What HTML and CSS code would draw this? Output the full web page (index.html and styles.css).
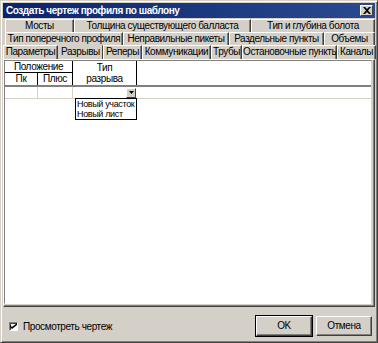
FILE: index.html
```html
<!DOCTYPE html>
<html>
<head>
<meta charset="utf-8">
<link rel="stylesheet" href="styles.css">
</head>
<body>
<div class="window">
  <div class="titlebar">
    <span class="title">Создать чертеж профиля по шаблону</span>
    <span class="close">
      <svg width="8" height="7" viewBox="0 0 8 7"><path d="M0 0h2l2 2 2-2h2L5 3.5 8 7H6L4 5 2 7H0l3-3.5z" fill="#000"/></svg>
    </span>
  </div>
  <div class="tabs">
    <div class="tabrow row1">
      <div class="tab" style="width:69px">Мосты</div>
      <div class="tab" style="width:177px">Толщина существующего балласта</div>
      <div class="tab" style="width:124px">Тип и глубина болота</div>
    </div>
    <div class="tabrow row2">
      <div class="tab" style="width:118px">Тип поперечного профиля</div>
      <div class="tab" style="width:106px">Неправильные пикеты</div>
      <div class="tab" style="width:95px">Раздельные пункты</div>
      <div class="tab" style="width:51px">Объемы</div>
    </div>
    <div class="tabrow row3">
      <div class="tab" style="width:55px">Параметры</div>
      <div class="tab active" style="width:45px">Разрывы</div>
      <div class="tab" style="width:39px">Реперы</div>
      <div class="tab" style="width:69px">Коммуникации</div>
      <div class="tab" style="width:31px">Трубы</div>
      <div class="tab" style="width:95px">Остановочные пункты</div>
      <div class="tab" style="width:39px">Каналы</div>
    </div>
  </div>
  <div class="panel">
    <div class="grid">
      <div class="header">
        <div class="hgroup">
          <div class="hcell htop">Положение</div>
          <div class="hsub">
            <div class="hcell c1">Пк</div>
            <div class="hcell c2">Плюс</div>
          </div>
        </div>
        <div class="hcell c3 htall">Тип<br>разрыва</div>
      </div>
      <div class="datarow">
        <div class="dcell c1"></div>
        <div class="dcell c2"></div>
        <div class="dcell c3 combo">
          <span class="dropbtn"><svg width="5" height="3" viewBox="0 0 5 3"><path d="M0 0h5L2.5 3z" fill="#000"/></svg></span>
          <div class="droplist">
            <div>Новый участок</div>
            <div>Новый лист</div>
          </div>
        </div>
      </div>
    </div>
  </div>
  <div class="footer">
    <label class="check">
      <span class="box"><svg width="7" height="7" viewBox="0 0 7 7"><path d="M0 2l2 2 5-4v2L2 6 0 4z" fill="#000"/></svg></span>
      Просмотреть чертеж
    </label>
    <div class="buttons">
      <button class="btn default">OK</button>
      <button class="btn">Отмена</button>
    </div>
  </div>
</div>
</body>
</html>
```

FILE: styles.css
```css
* { box-sizing: border-box; }
html, body { margin: 0; padding: 0; background: #d4d0c8; }
body {
  font-family: "Liberation Sans", Arial, sans-serif;
  font-size: 10px;
  letter-spacing: -0.4px;
  color: #000;
}
.window {
  width: 378px;
  height: 343px;
  background: #d4d0c8;
  border: 1px solid;
  border-color: #d4d0c8 #404040 #404040 #d4d0c8;
  box-shadow: inset 1px 1px 0 #fff, inset -1px -1px 0 #808080;
  padding: 2px;
  display: flex;
  flex-direction: column;
}
.titlebar {
  height: 15px;
  background: linear-gradient(to right, #0a246a, #2a4a90);
  display: flex;
  align-items: center;
  justify-content: space-between;
  padding: 0 2px 0 3px;
  flex: none;
}
.title {
  color: #fff;
  font-weight: bold;
  font-size: 10px;
  letter-spacing: -0.45px;
}
.close {
  width: 13px;
  height: 11px;
  background: #d4d0c8;
  border: 1px solid;
  border-color: #fff #404040 #404040 #fff;
  display: flex;
  align-items: center;
  justify-content: center;
}
.tabs {
  display: flex;
  flex-direction: column;
  flex: none;
  margin-top: 1px;
}
.tabrow {
  display: flex;
  height: 13px;
}
.row1, .row2 { padding-left: 2px; }
.row3 { padding-left: 0; height: 14px; }
.tab {
  flex: none;
  text-align: center;
  line-height: 12px;
  border-top: 1px solid #fff;
  border-left: 1px solid #fff;
  border-right: 1px solid #404040;
  box-shadow: inset -1px 0 0 #808080;
  white-space: nowrap;
}
.tab.active {
  border-top-color: transparent;
  border-left-color: transparent;
  box-shadow: none;
}
.panel {
  flex: none;
  height: 248px;
  border: 1px solid;
  border-color: #fff #404040 #404040 #fff;
  box-shadow: inset -1px -1px 0 #808080;
  padding: 0 2px 2px 0;
  display: flex;
}
.grid {
  flex: 1;
  background: #fff;
  border: 1px solid;
  border-color: #808080 #d4d0c8 #fff #808080;
  display: flex;
  flex-direction: column;
}
.header {
  display: flex;
  height: 26px;
  border-bottom: 2px solid #808080;
}
.hgroup {
  display: flex;
  flex-direction: column;
  width: 68px;
}
.hsub { display: flex; flex: 1; }
.hcell {
  text-align: center;
  border-right: 1px solid #000;
  line-height: 11px;
}
.htop {
  height: 12px;
  border-bottom: 1px solid #000;
}
.c1 { width: 33px; }
.c2 { width: 35px; }
.c3 { width: 64px; }
.htall { padding-top: 1px; }
.datarow {
  display: flex;
  height: 12px;
  border-bottom: 1px solid #d4d0c8;
}
.dcell {
  border-right: 1px solid #d4d0c8;
}
.combo {
  position: relative;
  display: flex;
  justify-content: flex-end;
  align-items: center;
  border-right: none;
}
.dropbtn {
  width: 10px;
  height: 10px;
  background: #d4d0c8;
  border: 1px solid;
  border-color: #fff #404040 #404040 #fff;
  display: flex;
  align-items: center;
  justify-content: center;
  margin-right: 1px;
}
.droplist {
  position: absolute;
  top: 11px;
  left: 2px;
  width: 62px;
  background: #fff;
  border: 1px solid #000;
  padding: 0 1px;
  line-height: 10px;
  font-size: 9px;
  letter-spacing: -0.35px;
  white-space: nowrap;
}
.footer {
  flex: 1;
  display: flex;
  align-items: center;
  justify-content: space-between;
  padding: 4px 3px 0 6px;
}
.check {
  display: flex;
  align-items: center;
  gap: 5px;
  margin-top: 2px;
}
.box {
  width: 9px;
  height: 9px;
  background: #fff;
  border: 1px solid;
  border-color: #808080 #fff #fff #808080;
  box-shadow: inset 1px 1px 0 #404040;
  display: flex;
  align-items: center;
  justify-content: center;
}
.buttons {
  display: flex;
  gap: 4px;
}
.btn {
  width: 56px;
  height: 20px;
  font-family: "Liberation Sans", Arial, sans-serif;
  font-size: 10px;
  letter-spacing: -0.4px;
  background: #d4d0c8;
  border: 1px solid;
  border-color: #fff #404040 #404040 #fff;
  box-shadow: inset -1px -1px 0 #808080;
  padding: 0;
  color: #000;
}
.btn.default {
  outline: 1px solid #000;
  border-color: #fff #404040 #404040 #fff;
}
```
